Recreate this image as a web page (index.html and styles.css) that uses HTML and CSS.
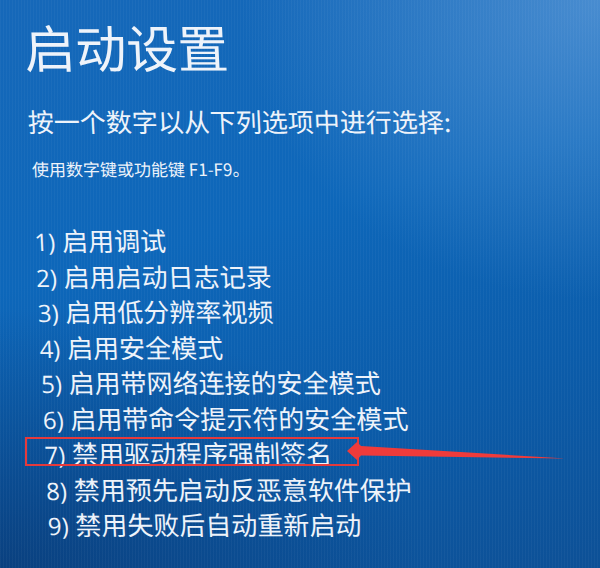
FILE: index.html
```html
<!DOCTYPE html>
<html lang="zh-CN">
<head>
<meta charset="utf-8">
<title>启动设置</title>
<link rel="stylesheet" href="styles.css">
</head>
<body>
<div class="screen">
  <div class="content">
    <h1 class="title">启动设置</h1>
    <p class="subtitle">按一个数字以从下列选项中进行选择:</p>
    <p class="hint">使用数字键或功能键 F1-F9。</p>
    <ol class="options">
      <li><span class="num">1)</span> 启用调试</li>
      <li><span class="num">2)</span> 启用启动日志记录</li>
      <li><span class="num">3)</span> 启用低分辨率视频</li>
      <li><span class="num">4)</span> 启用安全模式</li>
      <li><span class="num">5)</span> 启用带网络连接的安全模式</li>
      <li><span class="num">6)</span> 启用带命令提示符的安全模式</li>
      <li><span class="num">7)</span> 禁用驱动程序强制签名</li>
      <li><span class="num">8)</span> 禁用预先启动反恶意软件保护</li>
      <li><span class="num">9)</span> 禁用失败后自动重新启动</li>
    </ol>
  </div>
  <div class="highlight"></div>
  <svg class="arrow" width="600" height="568" viewBox="0 0 600 568" aria-hidden="true">
    <polygon points="347,451 357,442 361,446 566,458.5 361,455.5 357,460" fill="#ef3b3b"/>
  </svg>
</div>
</body>
</html>
```
FILE: styles.css
```css
html, body {
  margin: 0;
  padding: 0;
}
body {
  width: 600px;
  height: 568px;
  overflow: hidden;
}
.screen {
  position: relative;
  width: 600px;
  height: 568px;
  overflow: hidden;
  color: #eef3fa;
  font-family: "Open Sans", "Noto Sans CJK SC", sans-serif;
  background:
    repeating-linear-gradient(90deg, rgba(255,255,255,0.035) 0 1px, rgba(0,0,0,0) 1px 3px),
    radial-gradient(ellipse 360px 300px at 100% 0%, rgba(140,185,235,0.45), rgba(140,185,235,0) 100%),
    radial-gradient(ellipse 420px 260px at 0% 100%, rgba(8,40,90,0.5), rgba(8,40,90,0) 100%),
    linear-gradient(165deg, #1668b9 0%, #0d67ba 40%, #0b5caa 70%, #0d5096 100%);
}
.content {
  padding: 16px 0 0 22px;
  transform: skewX(2.7deg);
  transform-origin: 0 0;
}
.title {
  margin: 0;
  font-family: "Noto Sans CJK SC", sans-serif;
  font-weight: 400;
  font-size: 51px;
  line-height: 60px;
}
.subtitle {
  margin: 27px 0 0 0;
  font-family: "Noto Sans CJK SC", sans-serif;
  font-size: 26px;
  line-height: 36px;
}
.hint {
  margin: 18px 0 0 0;
  padding-left: 2px;
  font-family: "Noto Sans CJK SC", sans-serif;
  font-size: 17px;
  line-height: 24px;
}
.options {
  list-style: none;
  margin: 43px 0 0 0;
  padding: 0 0 0 1px;
  font-size: 26px;
  line-height: 34.5px;
}
.options li {
  white-space: nowrap;
}
.num {
  font-family: "Open Sans", sans-serif;
  font-size: 24px;
}
.highlight {
  position: absolute;
  left: 25px;
  top: 437px;
  width: 330px;
  height: 25px;
  border: 2px solid #e53a3c;
}
.arrow {
  position: absolute;
  left: 0;
  top: 0;
}
```
